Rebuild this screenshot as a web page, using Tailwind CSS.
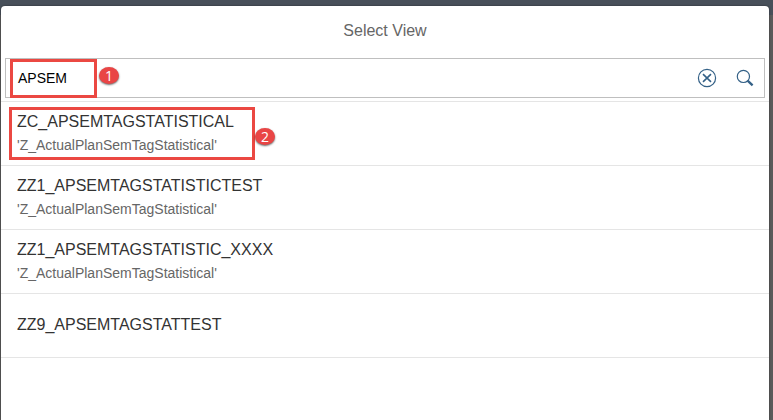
<!DOCTYPE html>
<html lang="en">
<head>
<meta charset="utf-8">
<title>Select View</title>
<script src="https://cdn.jsdelivr.net/npm/@tailwindcss/browser@4"></script>
</head>
<body class="relative h-[420px] w-[773px] overflow-hidden bg-[linear-gradient(to_bottom,#48505a_15px,#5a5a5a_15px)] pt-[6px] pr-[4px] pl-px font-['Liberation_Sans',Arial,sans-serif]">
  <main class="flex h-[414px] flex-col rounded-t-[4px] bg-white shadow-[0_0_2px_rgba(0,0,0,0.5)]">
    <header class="flex h-[52px] items-center justify-center pb-[3px]">
      <h1 class="text-[16px] leading-[20px] text-[#666666]">Select View</h1>
    </header>
    <div class="mx-[4px] mb-[3px] flex h-[40px] shrink-0 items-center border border-[#bfbfbf] pr-[9px] pl-[12px]">
      <span class="grow text-[14px] leading-[18px] text-black">APSEM</span>
      <button class="mr-[18px]" aria-label="Clear">
        <svg class="block size-[20px]" viewBox="0 0 20 20" fill="none" stroke="#346187"><circle cx="10" cy="10" r="8.6" stroke-width="1.2"/><path d="M6 6.2 14 13.8M14 6.2 6 13.8" stroke-width="1.6"/></svg>
      </button>
      <button aria-label="Search">
        <svg class="block size-[20px]" viewBox="0 0 20 20" fill="none" stroke="#346187"><circle cx="8.4" cy="8.4" r="6.1" stroke-width="1.2"/><path d="M12.6 12.6 17.6 17.4" stroke-width="2.3"/></svg>
      </button>
    </div>
    <ul class="border-t border-[#e5e5e5] text-[#333333]">
      <li class="flex h-[64px] flex-col border-b border-[#e5e5e5] pt-[10px] pl-[16px]">
        <span class="text-[16px] leading-[20px]">ZC_APSEMTAGSTATISTICAL</span>
        <span class="mt-[4px] text-[14px] leading-[18px] text-[#666666]">'Z_ActualPlanSemTagStatistical'</span>
      </li>
      <li class="flex h-[64px] flex-col border-b border-[#e5e5e5] pt-[10px] pl-[16px]">
        <span class="text-[16px] leading-[20px]">ZZ1_APSEMTAGSTATISTICTEST</span>
        <span class="mt-[4px] text-[14px] leading-[18px] text-[#666666]">'Z_ActualPlanSemTagStatistical'</span>
      </li>
      <li class="flex h-[64px] flex-col border-b border-[#e5e5e5] pt-[10px] pl-[16px]">
        <span class="text-[16px] leading-[20px]">ZZ1_APSEMTAGSTATISTIC_XXXX</span>
        <span class="mt-[4px] text-[14px] leading-[18px] text-[#666666]">'Z_ActualPlanSemTagStatistical'</span>
      </li>
      <li class="flex h-[64px] items-center border-b border-[#e5e5e5] pb-[2px] pl-[16px]">
        <span class="text-[16px] leading-[20px]">ZZ9_APSEMTAGSTATTEST</span>
      </li>
    </ul>
  </main>

  <!-- Step annotations -->
  <div class="absolute top-[59px] left-[10px] h-[39px] w-[87px] border-3 border-[#eb4842]"></div>
  <div class="absolute top-[67px] left-[99px] flex h-[17px] w-[20px] items-center justify-center rounded-[50%] bg-[#e94545] font-['Open_Sans',sans-serif] text-[14px] leading-none text-white shadow-[0_1px_2px_rgba(0,0,0,0.6)]">1</div>
  <div class="absolute top-[107px] left-[9px] h-[53px] w-[246px] border-3 border-[#eb4842]"></div>
  <div class="absolute top-[128px] left-[255px] flex h-[17px] w-[20px] items-center justify-center rounded-[50%] bg-[#e94545] font-['Open_Sans',sans-serif] text-[14px] leading-none text-white shadow-[0_1px_2px_rgba(0,0,0,0.6)]">2</div>
</body>
</html>
